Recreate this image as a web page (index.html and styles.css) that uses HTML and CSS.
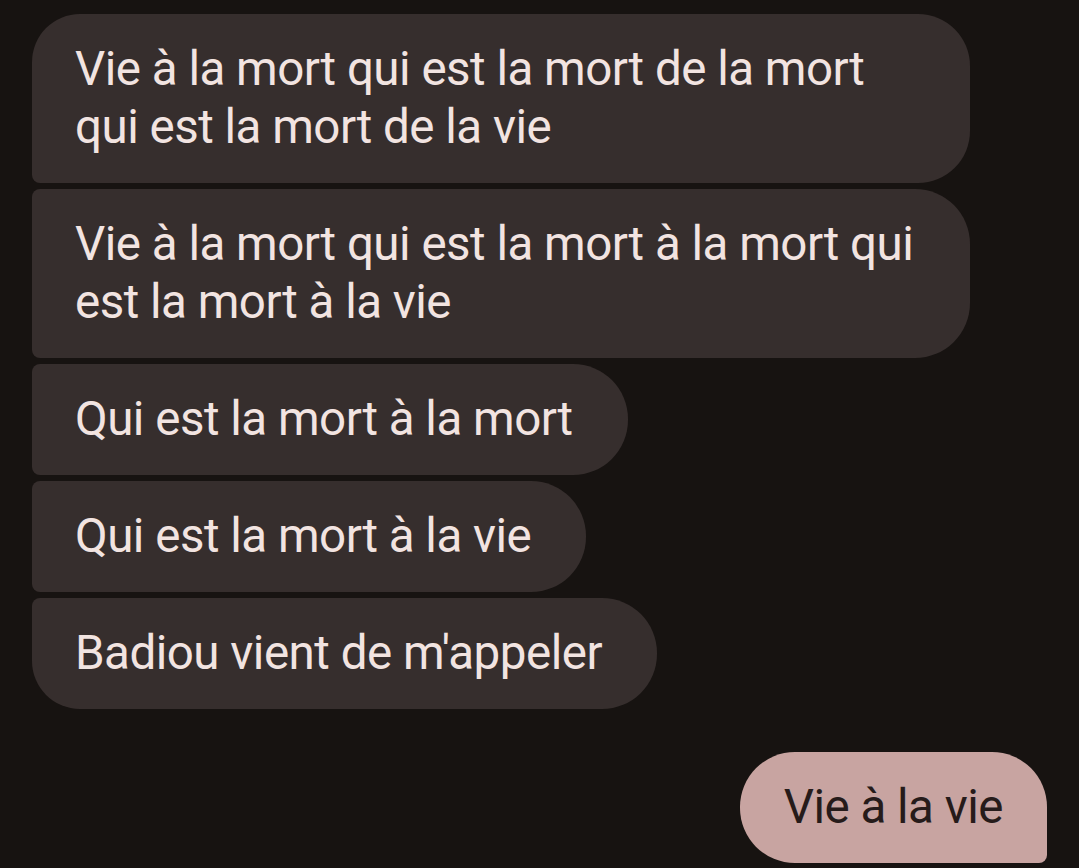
FILE: index.html
```html
<!DOCTYPE html>
<html lang="fr">
<head>
<meta charset="utf-8">
<link rel="stylesheet" href="styles.css">
</head>
<body>
<main class="thread">
  <div class="group received">
    <div class="bubble first">Vie à la mort qui est la mort de la mort qui est la mort de la vie</div>
    <div class="bubble middle">Vie à la mort qui est la mort à la mort qui est la mort à la vie</div>
    <div class="bubble middle">Qui est la mort à la mort</div>
    <div class="bubble middle">Qui est la mort à la vie</div>
    <div class="bubble last">Badiou vient de m'appeler</div>
  </div>
  <div class="group sent">
    <div class="bubble solo-sent">Vie à la vie</div>
  </div>
</main>
</body>
</html>
```
FILE: styles.css
```css
html, body {
  margin: 0;
  padding: 0;
  background: #171311;
}
body {
  width: 1079px;
  height: 868px;
  overflow: hidden;
  font-family: Roboto, "Noto Sans", sans-serif;
}
.thread {
  display: flex;
  flex-direction: column;
  gap: 43px;
  padding: 14px 32px 0 32px;
}
.group {
  display: flex;
  flex-direction: column;
  gap: 6px;
}
.received { align-items: flex-start; }
.sent { align-items: flex-end; }
.bubble {
  box-sizing: border-box;
  max-width: 938px;
  padding: 26px 55px 27px 43px;
  font-size: 47.5px;
  letter-spacing: -0.5px;
  line-height: 58px;
  background: #362e2d;
  color: #f2e4e1;
  border-radius: 8px 55px 55px 8px;
}
.bubble.first { border-radius: 48px 52px 52px 8px; }
.bubble.last { border-radius: 8px 55px 55px 48px; }
.bubble.solo-sent {
  padding: 26px 44px 27px 44px;
  background: #c8a4a1;
  color: #261b1a;
  border-radius: 55px 55px 8px 55px;
}
```
